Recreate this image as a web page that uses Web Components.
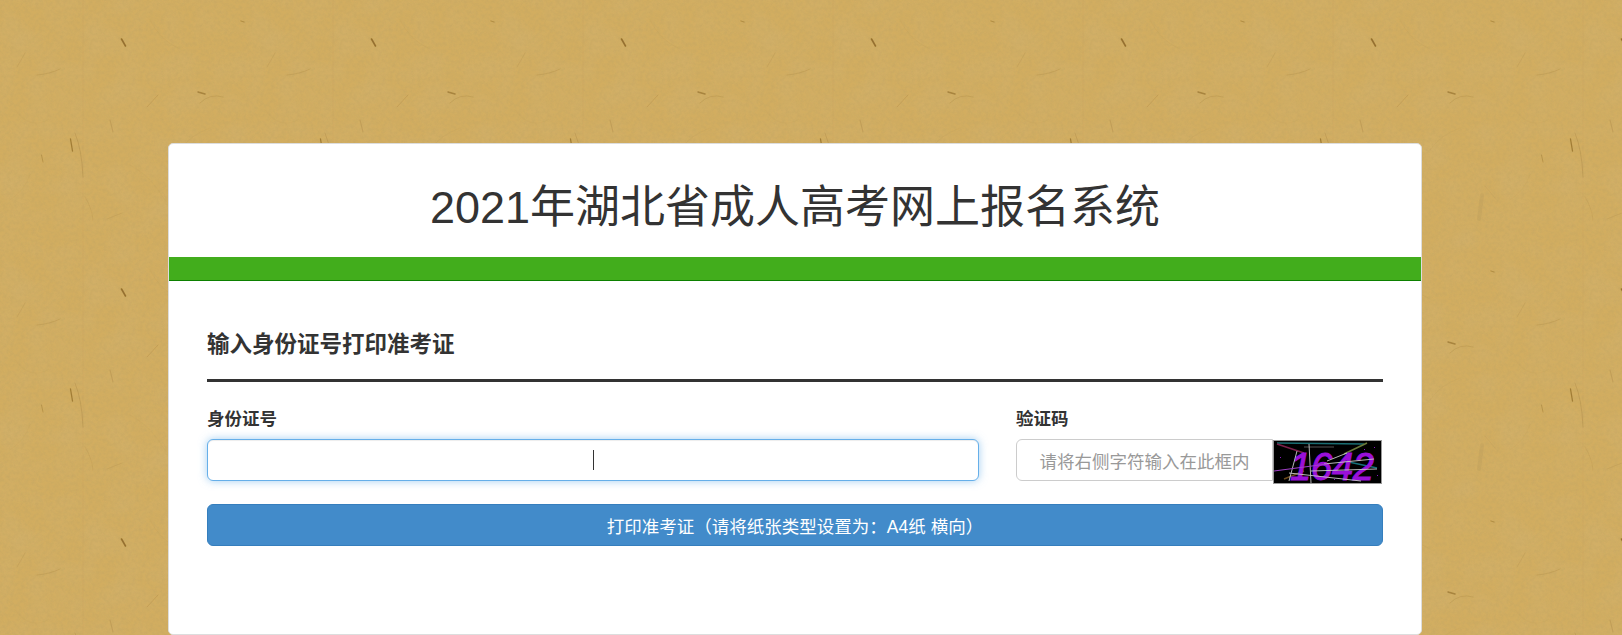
<!DOCTYPE html>
<html lang="zh-CN">
<head>
<meta charset="utf-8">
<title>2021年湖北省成人高考网上报名系统</title>
<style>
  html, body { margin: 0; height: 100%; overflow: hidden; }
  body { font-family: "Liberation Sans", "Noto Sans CJK SC", sans-serif; color: #333; }
</style>
</head>
<body>
<paper-page>
  <exam-panel title-text="2021年湖北省成人高考网上报名系统">
    <section-title>输入身份证号打印准考证</section-title>
    <form-row>
      <form-field slot="left" label="身份证号"><text-box focused></text-box></form-field>
      <form-field slot="right" label="验证码">
        <text-box>请将右侧字符输入在此框内</text-box>
        <captcha-image></captcha-image>
      </form-field>
    </form-row>
    <print-button>打印准考证（请将纸张类型设置为：A4纸 横向）</print-button>
  </exam-panel>
</paper-page>

<script>
// kraft paper tile, 250x250, fibres read off the reference
const fibres = [
  ['M70.5 139 L72.5 151', '#8f6a22', 1.3, .7],
  ['M75 133 Q82 150 83 177', '#a98646', 1, .38],
  ['M41.5 155 L43 162', '#94702c', 1, .42],
  ['M121.5 39 L125.5 46', '#80591a', 1.6, .72],
  ['M17 67 L25 53', '#a98646', .8, .28],
  ['M37 75 Q50 74 60 69', '#a07c3c', .8, .32],
  ['M147 107 L158 95', '#a07c3c', .9, .32],
  ['M110 120 L113 132', '#a98646', 1.1, .38],
  ['M85 197 Q92 208 93 220', '#a98646', .8, .25],
  ['M107 219 L122 213', '#a98646', .8, .28],
  ['M198 92 L205 94', '#86601e', 1.5, .55],
  ['M200 103 Q210 93 223 97', '#a07c3c', .8, .32],
  ['M241 21 L244 22', '#8f6a22', 1.3, .45],
  ['M232 195 L229 219', '#b39658', 4, .28],
  ['M235 186 L245 198', '#b0935a', .8, .28],
  ['M83 0 V250', '#b8944c', 1, .1],
  ['M150 20 Q160 40 178 48', '#b39250', .8, .16],
  ['M15 110 Q30 130 48 120', '#b39250', .8, .14],
  ['M180 150 Q190 135 210 128', '#b39250', .8, .16],
  ['M130 165 Q150 175 165 200', '#b39250', .8, .14],
  ['M10 200 Q25 190 30 175', '#b39250', .8, .14]
]
const paperSvg = `<svg xmlns="http://www.w3.org/2000/svg" width="250" height="250">
<filter id="n" x="0" y="0" width="100%" height="100%"><feTurbulence type="fractalNoise" baseFrequency=".28" numOctaves="3" seed="7" stitchTiles="stitch"/><feColorMatrix values="0 0 0 0 .55  0 0 0 0 .38  0 0 0 0 .12  1.3 0 0 0 -.42"/></filter>
<filter id="l" x="0" y="0" width="100%" height="100%"><feTurbulence type="fractalNoise" baseFrequency=".035" numOctaves="2" seed="3" stitchTiles="stitch"/><feColorMatrix values="0 0 0 0 .62  0 0 0 0 .46  0 0 0 0 .2  1.1 0 0 0 -.42"/></filter>
<filter id="s"><feGaussianBlur stdDeviation=".5"/></filter>
<rect width="250" height="250" fill="#d2ad60"/>
<rect width="250" height="250" filter="url(#l)" opacity=".5"/>
<rect width="250" height="250" filter="url(#n)" opacity=".75"/>
<g fill="none" stroke-linecap="round" filter="url(#s)">${fibres.map(f => `<path d="${f[0]}" stroke="${f[1]}" stroke-width="${f[2]}" opacity="${f[3]}"/>`).join('')}</g>
</svg>`

class PaperPage extends HTMLElement {
  constructor() {
    super()
    this.attachShadow({ mode: 'open' }).innerHTML = `
      <style>
        :host {
          display: block;
          box-sizing: border-box;
          height: 100vh;
          overflow: hidden;
          padding: 143px 200px 0 168px;
          background-color: #cda75a;
          background-image: url("data:image/svg+xml,${encodeURIComponent(paperSvg)}");
          background-size: 250px 250px;
        }
      </style>
      <slot></slot>`
  }
}

class ExamPanel extends HTMLElement {
  constructor() {
    super()
    this.attachShadow({ mode: 'open' })
  }
  connectedCallback() {
    this.shadowRoot.innerHTML = `
      <style>
        :host {
          display: block;
          box-sizing: border-box;
          height: 492px;
          background: #fff;
          border: 1px solid #ddd;
          border-radius: 5px;
        }
        h1 {
          margin: 0;
          padding: 39px 0 24px;
          font-size: 45px;
          font-weight: 400;
          line-height: 50px;
          text-align: center;
          color: #333;
        }
        .bar {
          height: 23px;
          background: #42ad1c;
          border-bottom: 1px solid #0c8000;
        }
        .body { padding: 49px 38px 0; }
      </style>
      <h1>${this.getAttribute('title-text')}</h1>
      <div class="bar"></div>
      <div class="body"><slot></slot></div>`
  }
}

class SectionTitle extends HTMLElement {
  constructor() {
    super()
    this.attachShadow({ mode: 'open' }).innerHTML = `
      <style>
        :host {
          display: block;
          padding-bottom: 19px;
          border-bottom: 3px solid #333;
          font-size: 22.5px;
          font-weight: 700;
          line-height: 30px;
          color: #333;
        }
      </style>
      <slot></slot>`
  }
}

class FormRow extends HTMLElement {
  constructor() {
    super()
    this.attachShadow({ mode: 'open' }).innerHTML = `
      <style>
        :host {
          display: grid;
          grid-template-columns: 772px 1fr;
          column-gap: 37px;
          margin-top: 25px;
        }
      </style>
      <slot name="left"></slot>
      <slot name="right"></slot>`
  }
}

class FormField extends HTMLElement {
  constructor() {
    super()
    this.attachShadow({ mode: 'open' })
  }
  connectedCallback() {
    this.shadowRoot.innerHTML = `
      <style>
        :host { display: block; }
        label {
          display: block;
          margin-bottom: 8px;
          font-size: 17.5px;
          font-weight: 700;
          line-height: 24px;
          color: #333;
        }
        .controls { display: flex; align-items: flex-start; }
      </style>
      <label>${this.getAttribute('label')}</label>
      <div class="controls"><slot></slot></div>`
  }
}

class TextBox extends HTMLElement {
  constructor() {
    super()
    this.attachShadow({ mode: 'open' }).innerHTML = `
      <style>
        :host {
          flex: 1;
          min-width: 0;
          box-sizing: border-box;
          height: 42px;
          display: flex;
          align-items: center;
          justify-content: center;
          background: #fff;
          border: 1px solid #ccc;
          border-radius: 6px 0 0 6px;
          font-size: 17.5px;
          color: #999;
        }
        :host([focused]) {
          border-color: #66afe9;
          border-radius: 6px;
          box-shadow: inset 0 1px 1px rgba(0,0,0,.075), 0 0 8px rgba(102,175,233,.6);
        }
        .caret { display: none; width: 1px; height: 20px; background: #333; }
        :host([focused]) .caret { display: block; }
      </style>
      <span class="caret"></span>
      <slot></slot>`
  }
}

class CaptchaImage extends HTMLElement {
  constructor() {
    super()
    this.attachShadow({ mode: 'open' }).innerHTML = `
      <style>
        :host {
          display: block;
          flex: none;
          box-sizing: border-box;
          width: 109px;
          height: 44px;
          margin: 1px 1px 0 0;
          border: 1px solid #999;
          background: #000;
        }
        svg { display: block; width: 100%; height: 100%; overflow: visible; }
        text { font-family: "Liberation Sans", sans-serif; }
      </style>
      <svg viewBox="0 0 107 42" aria-label="captcha">
        <g fill="none" stroke-width="1">
          <path d="M3 2 L90 3" stroke="#1a6d72" stroke-width="1.6"/>
          <path d="M70 13 L93 2" stroke="#6a7a3a" stroke-width="1.6"/>
          <path d="M3 3 L30 12" stroke="#7a1f4a" stroke-width="1.6"/>
          <path d="M30 6 L60 6" stroke="#555"/>
          <path d="M70 20 L103 27" stroke="#14707a" stroke-width="1.4"/>
          <path d="M10 38 L30 30" stroke="#6b4a1c" stroke-width="1.4"/>
        </g>
        <text x="16" y="39" font-size="38" font-style="italic" fill="#9a10d8" stroke="#9a10d8" stroke-width="1" textLength="84" lengthAdjust="spacing">1642</text>
        <g fill="none" stroke="#c9c9c9" stroke-width=".9">
          <path d="M35 3 L37 42"/>
          <path d="M23 10 L15 40"/>
          <path d="M15 32 L87 40"/>
          <path d="M53 20 L73 12"/>
          <path d="M50 23 L100 18"/>
          <path d="M37 30 L103 28"/>
        </g>
        <path d="M0 30 L53 23" stroke="#a040c8" fill="none"/>
        <g fill="#8a18c0">
          <rect x="90" y="8" width="1" height="1"/><rect x="100" y="6" width="1" height="1"/>
          <rect x="103" y="34" width="1" height="1"/><rect x="6" y="16" width="1" height="1"/>
          <rect x="60" y="38" width="1" height="1"/><rect x="95" y="38" width="1" height="1"/>
        </g>
      </svg>`
  }
}

class PrintButton extends HTMLElement {
  constructor() {
    super()
    this.attachShadow({ mode: 'open' }).innerHTML = `
      <style>
        :host { display: block; margin-top: 20px; }
        button {
          display: block;
          box-sizing: border-box;
          width: 100%;
          height: 42px;
          padding: 0;
          font: inherit;
          font-size: 17.5px;
          color: #fff;
          background: #428bca;
          border: 1px solid #357ebd;
          border-radius: 6px;
        }
      </style>
      <button type="button"><slot></slot></button>`
  }
}

customElements.define('paper-page', PaperPage)
customElements.define('exam-panel', ExamPanel)
customElements.define('section-title', SectionTitle)
customElements.define('form-row', FormRow)
customElements.define('form-field', FormField)
customElements.define('text-box', TextBox)
customElements.define('captcha-image', CaptchaImage)
customElements.define('print-button', PrintButton)
</script>
</body>
</html>
